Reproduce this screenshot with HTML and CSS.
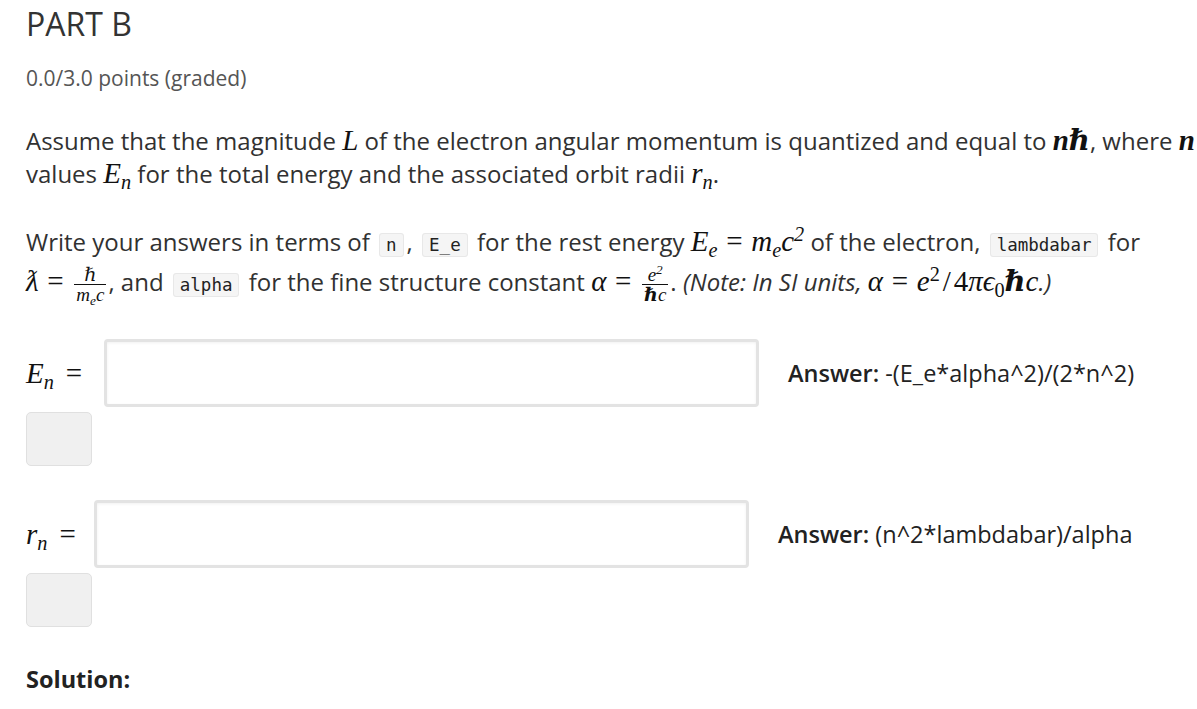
FILE: index.html
```html
<!DOCTYPE html>
<html>
<head>
<meta charset="utf-8">
<link rel="stylesheet" href="styles.css">
</head>
<body>
<div class="page">
  <h2 class="title">PART B</h2>
  <div class="points">0.0/3.0 points (graded)</div>
  <p class="para p1">
    <span class="line">Assume that the magnitude <span class="m">L</span> of the electron angular momentum is quantized and equal to <span class="m b">nℏ</span>, where <span class="m b">n</span></span>
    <span class="line">values <span class="m">E<sub>n</sub></span> for the total energy and the associated orbit radii <span class="m">r<sub>n</sub></span>.</span>
  </p>
  <p class="para p2">
    <span class="line l1">Write your answers in terms of <code>n</code>, <code>E_e</code> for the rest energy <span class="m">E<sub>e</sub><span class="up rel">=</span>m<sub>e</sub>c<sup>2</sup></span> of the electron, <code>lambdabar</code> for</span>
    <span class="line l2"><span class="m">ƛ<span class="up rel">=</span><span class="frac"><span class="num b">ℏ</span><span class="den">m<sub>e</sub>c</span></span></span>, and <code>alpha</code> for the fine structure constant <span class="m">α<span class="up rel">=</span><span class="frac"><span class="num">e<sup>2</sup></span><span class="den"><b>ℏ</b>c</span></span></span>. <i>(Note: In SI units, <span class="m">α<span class="up rel">=</span>e<sup class="up">2</sup><span class="up slash">/</span><span class="up">4</span>πϵ<sub class="up">0</sub><b>ℏ</b>c</span>.)</i></span>
  </p>

  <div class="row r1">
    <span class="lhs m">E<sub>n</sub><span class="up eq">=</span></span>
    <div class="input"></div>
    <div class="answer"><b>Answer:</b> -(E_e*alpha^2)/(2*n^2)</div>
  </div>
  <div class="status"></div>

  <div class="row r2">
    <span class="lhs m">r<sub>n</sub><span class="up eq">=</span></span>
    <div class="input"></div>
    <div class="answer"><b>Answer:</b> (n^2*lambdabar)/alpha</div>
  </div>
  <div class="status"></div>

  <div class="solution">Solution:</div>
</div>
</body>
</html>
```
FILE: styles.css
```css
html, body {
  margin: 0;
  padding: 0;
  background: #fff;
  overflow: hidden;
}
body {
  font-family: "Open Sans", "Noto Sans", sans-serif;
  color: #313131;
}
.page {
  padding: 0 0 0 26px;
  width: 1171px;
}
.title {
  margin: 0;
  padding-top: 5px;
  font-size: 32px;
  font-weight: 400;
  line-height: 38px;
  color: #333;
}
.points {
  margin-top: 22px;
  font-size: 21px;
  line-height: 26px;
  color: #555;
}
.para {
  margin: 0;
  font-size: 24px;
}
.line {
  display: block;
  white-space: nowrap;
}
.p1 {
  margin-top: 33px;
  line-height: 33px;
}
.p2 {
  margin-top: 35px;
}
.p2 .l1 { line-height: 34px; }
.p2 .l2 { line-height: 36px; margin-top: 2px; }
.m {
  font-family: "Liberation Serif", "DejaVu Serif", serif;
  font-style: italic;
  font-size: 29px;
  color: #111;
  line-height: 0;
}
.m.b, .m b, .frac b {
  font-weight: 700;
}
.m sub, .m sup {
  font-size: 0.7em;
  line-height: 0;
}
.m sub { vertical-align: -0.3em; }
.m sup { vertical-align: 0.5em; }
.up {
  font-style: normal;
}
.rel {
  margin: 0 0.3em;
}
.slash { margin: 0 0.1em; }
code {
  font-family: "DejaVu Sans Mono", "Liberation Mono", monospace;
  font-size: 17.5px;
  background: #f5f5f5;
  border: 1px solid #e8e8e8;
  border-radius: 3px;
  padding: 1px 6px;
  color: #222;
  margin: 0 3px;
}
.frac {
  display: inline-flex;
  flex-direction: column;
  vertical-align: middle;
  font-size: 19px;
  line-height: 19px;
  text-align: center;
  margin: 0 2px;
}
.frac .num {
  border-bottom: 1.5px solid #111;
  padding: 0 2px;
}
.frac .den { padding: 0 2px; }
.frac sub, .frac sup { font-size: 0.7em; }
.row {
  display: flex;
  align-items: center;
}
.r1 { margin-top: 35px; }
.r2 { margin-top: 34px; }
.lhs {
  font-size: 29px;
  line-height: 36px;
  width: 78px;
  flex: none;
}
.r2 .lhs { width: 68px; }
.eq { margin-left: 12px; }
.input {
  width: 649px;
  height: 62px;
  border: 3px solid #e3e3e3;
  border-radius: 4px;
  box-shadow: inset 0 1px 3px rgba(0,0,0,0.06);
  background: #fff;
  flex: none;
}
.answer {
  margin-left: 29px;
  font-size: 23.5px;
  color: #222;
}
.answer b { font-weight: 600; }
.status {
  margin-top: 5px;
  width: 64px;
  height: 52px;
  background: #f0f0f0;
  border: 1px solid #e0e0e0;
  border-radius: 5px;
}
.solution {
  margin-top: 36px;
  font-size: 23.5px;
  font-weight: 700;
  color: #222;
}
```
